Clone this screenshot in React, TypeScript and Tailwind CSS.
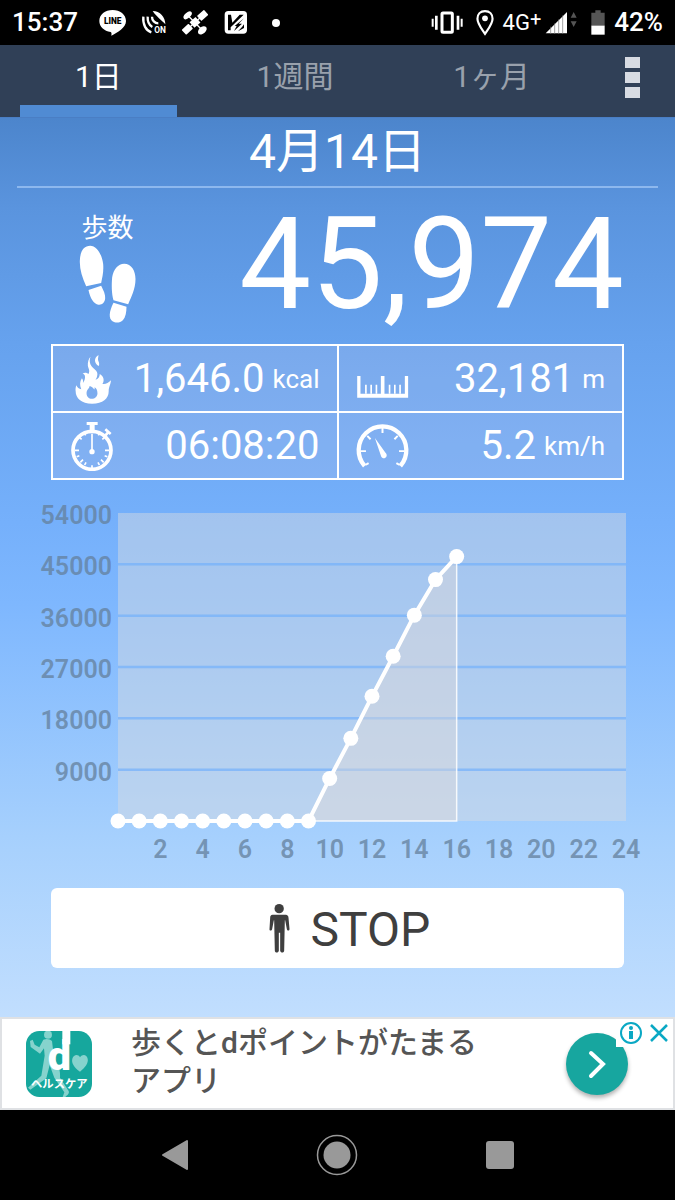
import type { ReactNode } from "react";

const tabs = [
  { label: "1日", active: true },
  { label: "1週間", active: false },
  { label: "1ヶ月", active: false },
];

const hourlySteps = [
  0, 0, 0, 0, 0, 0, 0, 0, 0, 0, 7460, 14490, 21860, 28890, 36090, 42320, 46360,
];

const StatusBar = () => (
  <header className="flex h-[45px] items-center justify-between bg-black px-3 text-[26px] font-medium text-white">
    <div className="flex items-center gap-[14px]">
      <span className="mr-[7px]">15:37</span>
      <svg viewBox="0 0 81 81" className="size-[27px]">
        <path
          d="M41 3C18 3 1 17 1 36c0 17 14 30 34 33 3 1 3 5 2 11 18-9 44-24 44-44C81 17 63 3 41 3Z"
          fill="#fff"
        />
        <text x="41" y="46" fontSize="25" fontWeight="900" textAnchor="middle">
          LINE
        </text>
      </svg>
      <svg viewBox="0 0 81 81" className="size-[27px]" fill="none" stroke="#fff">
        <path d="M38 6c22 0 38 18 38 40C66 34 50 24 38 6Z" fill="#fff" stroke="none" />
        <path d="M10 23c-2 24 8 42 24 47" strokeWidth="7" />
        <path d="M23 23c-1 16 5 26 14 31" strokeWidth="7" />
        <path d="M36 23c0 11 8 20 19 20" strokeWidth="7" />
        <text x="60" y="73" fontSize="25" fontWeight="700" textAnchor="middle" fill="#fff" stroke="none">
          ON
        </text>
      </svg>
      <svg viewBox="0 0 81 81" className="size-[27px]" fill="#fff">
        <g transform="rotate(-42 42 40)">
          <rect x="30" y="29" width="24" height="22" />
          <rect x="-3" y="30" width="28" height="20" rx="2" />
          <rect x="59" y="30" width="28" height="20" rx="2" />
          <path d="M20 38h44v4H20z" />
        </g>
        <ellipse cx="20" cy="19" rx="15" ry="8" transform="rotate(-42 20 19)" />
        <ellipse cx="64" cy="64" rx="15" ry="10" transform="rotate(-42 64 64)" />
        <path d="M20 19 64 64" stroke="#fff" strokeWidth="4" />
      </svg>
      <svg viewBox="0 0 81 81" className="size-[27px]">
        <rect x="8" y="6" width="67" height="68" rx="11" fill="#fff" />
        <path d="M18 17h9l4 24 22-24h12L26 55v9h-8Z" fill="#000" />
        <path d="M66 28 50 44h10L36 66l8-15h-6Z" fill="#000" />
        <path d="M66 46v11L48 67l12-13Z" fill="#000" />
      </svg>
      <span className="flex w-[27px] justify-center">
        <span className="size-2 rounded-full bg-white" />
      </span>
    </div>
    <div className="flex items-center">
      <svg viewBox="0 0 96 75" className="mr-3 h-[25px] w-8">
        <rect x="33" y="9" width="31" height="58" rx="3" fill="none" stroke="#fff" strokeWidth="9" />
        <path d="M12 17h8v42h-8zM2 26h6v24H2zM77 17h8v42h-8zM89 26h6v24h-6z" fill="#fff" />
      </svg>
      <svg viewBox="0 0 54 75" className="mr-2 h-[27px] w-5">
        <path
          d="M27 6C14 6 6 15 6 27c0 14 12 28 21 42 9-14 21-28 21-42C48 15 40 6 27 6Z"
          fill="none"
          stroke="#fff"
          strokeWidth="6"
        />
        <circle cx="27" cy="26" r="8" fill="#fff" />
      </svg>
      <span className="mr-1 flex text-[22px] leading-6 font-normal">
        4G<span className="text-xl leading-4">+</span>
      </span>
      <svg viewBox="0 0 99 75" className="mr-[13px] h-[25px] w-[33px]">
        <path d="M2 70 66 6v64Z" fill="#fff" />
        <path d="M17 50v22M29 40v32M41 28v44M53 16v56" stroke="#777" strokeWidth="2" />
        <path d="m86 6 9 17H77ZM86 51l9-17H77Z" fill="#555" />
      </svg>
      <svg viewBox="0 0 42 75" className="mr-[9px] h-[25px] w-[14px]">
        <path d="M13 1h16v7h12v40H1V8h12Z" fill="#555" />
        <path d="M1 47h40v27H1z" fill="#fff" />
      </svg>
      <span>42%</span>
    </div>
  </header>
);

const TabBar = () => (
  <nav className="flex h-[73px] border-b border-[#4a7ec4] bg-[#304057]">
    <div className="grid flex-1 grid-cols-3">
      {tabs.map((tab) => (
        <button
          key={tab.label}
          className={
            tab.active
              ? "flex flex-col px-5 text-3xl text-white"
              : "flex flex-col px-5 text-3xl text-[#99a1ac]"
          }
        >
          <span className="flex w-full flex-1 items-center justify-center pt-1">{tab.label}</span>
          <span className={tab.active ? "h-3 w-full bg-[#508bd3]" : "h-3 w-full"} />
        </button>
      ))}
    </div>
    <button aria-label="メニュー" className="flex w-[85px] flex-col items-center gap-1 pt-3">
      <span className="h-[11px] w-[15px] bg-[#d7dbe2]" />
      <span className="h-[11px] w-[15px] bg-[#d7dbe2]" />
      <span className="h-[11px] w-[15px] bg-[#d7dbe2]" />
    </button>
  </nav>
);

const FootprintsIcon = () => (
  <svg viewBox="0 0 176 240" className="h-20 w-[59px]" fill="#fff">
    <path d="M24 127C12 100 4 75 5 50 6 20 18 5 36 5c20 0 35 25 39 55 2 25-3 40-6 57Z" />
    <path d="m31 138 38-13c7 14 13 26 12 38-1 13-9 20-20 19-14-2-25-18-30-44Z" />
    <path d="m150 181-44-12c-6-19-6-49-4-69 4-25 18-41 36-41 22 0 34 21 34 46 0 30-13 54-22 76Z" />
    <path d="m106 176 39 12c0 17-3 32-11 41-8 8-22 9-31 3-12-10-11-28 3-56Z" />
  </svg>
);

const FlameIcon = () => (
  <svg viewBox="0 0 115 150" className="h-[50px] w-[38px]" fill="#fff">
    <path
      fillRule="evenodd"
      d="M50 8c-5 14-2 24 8 34 10 8 15 14 12 24-1 5-3 9-5 11 8-2 13-8 13-17 12 7 15 20 8 30 9 2 18-3 26-11-1 14-7 20-7 33 0 22-18 38-50 38C22 150 5 132 5 112c-1-6 0-12 2-18 3 7 8 11 15 12-5-11-5-24 2-33 4 5 4 10 3 14 6-8 7-15 6-22-2-5-4-6-7-7 7-4 14-2 18 2 5-9 0-16-2-24-1-12 2-22 8-28ZM47 96c1 7-9 10-9 22 0 10 7 17 16 17s17-7 17-17c0-9-4-16-9-18 1 3 1 5-1 7-3-6-8-10-14-11Z"
    />
    <path d="M74 2c-14 9-14 24 1 34 3-7 0-12-2-18-1-6 1-10 1-16Z" />
  </svg>
);

const StopwatchIcon = () => (
  <svg viewBox="0 0 132 150" className="h-[50px] w-11" fill="none" stroke="#fff">
    <circle cx="66" cy="88" r="57" strokeWidth="11" />
    <path d="M50 3h33v9H74v16H59V12h-9z" fill="#fff" stroke="none" />
    <path d="m106 44 8-10M106 25l16 14" strokeWidth="8" />
    <path
      d="M66 133v10M14 88h13M105 88h13M27 48l8 7M105 48l-8 7M31 124l8-8M101 124l-8-8M43 35l4 8M89 35l-4 8M20 107l8-3M112 107l-8-3M44 132l4-8M88 132l-4-8"
      strokeWidth="5"
    />
    <path d="M66 38v50" strokeWidth="5" />
    <circle cx="66" cy="92" r="8" fill="#fff" stroke="none" />
  </svg>
);

const RulerIcon = () => (
  <svg viewBox="0 0 160 70" className="h-[23px] w-[53px]" fill="#fff">
    <path d="M3 3h10v54h62V3h11v54h62V3h10v66H3z" />
    <path d="M27 30h5v27h-5zM43 30h5v27h-5zM59 30h5v27h-5zM99 30h5v27h-5zM115 30h5v27h-5zM131 30h5v27h-5z" />
  </svg>
);

const GaugeIcon = () => (
  <svg viewBox="0 0 160 133" className="h-11 w-[53px]" fill="none" stroke="#fff">
    <path d="M26 127a72 72 0 1 1 108 0" strokeWidth="13" />
    <path d="M80 10v17M14 82h16M146 82h-16M34 36l10 10M126 36l-10 10M28 124l10-6M132 124l-10-6" strokeWidth="6" />
    <path d="M57 42 76 98c3 7 13 7 16 0 2-4 0-8-3-11Z" fill="#fff" stroke="none" />
  </svg>
);

type MetricProps = {
  label: string;
  icon: ReactNode;
  value: string;
  unit?: string;
};

const Metric = ({ label, icon, value, unit }: MetricProps) => (
  <div className="flex h-[65px] items-center justify-between bg-[#c8c8e8]/20 px-[17px]">
    <dt aria-label={label} className="flex w-[53px] items-center justify-start">
      {icon}
    </dt>
    <dd className="flex items-center gap-2 text-[40px] leading-none text-white">
      {value}
      {unit && <span className="text-[26px]">{unit}</span>}
    </dd>
  </div>
);

const Summary = () => (
  <section className="px-[51px]">
    <div className="flex h-[156px] justify-between">
      <div className="flex flex-col items-center pt-6 pl-[27px] text-white">
        <h2 className="text-[26px] leading-8">歩数</h2>
        <FootprintsIcon />
      </div>
      <p className="pt-3 text-9xl text-white">45,974</p>
    </div>
    <dl className="grid grid-cols-2 gap-0.5 border-2 border-white bg-[linear-gradient(#fff,#fff),linear-gradient(#fff,#fff)] bg-[size:2px_100%,100%_2px] bg-center bg-no-repeat">
      <Metric
        label="カロリー"
        icon={<span className="pl-1"><FlameIcon /></span>}
        value="1,646.0"
        unit="kcal"
      />
      <Metric
        label="距離"
        icon={<span className="pt-4"><RulerIcon /></span>}
        value="32,181"
        unit="m"
      />
      <Metric label="時間" icon={<StopwatchIcon />} value="06:08:20" />
      <Metric label="速度" icon={<GaugeIcon />} value="5.2" unit="km/h" />
    </dl>
  </section>
);

const plot = { left: 118, right: 626, top: 33, bottom: 341 };
const maxSteps = 54000;

const xAt = (hour: number) => plot.left + (hour / 24) * (plot.right - plot.left);
const yAt = (steps: number) => plot.bottom - (steps / maxSteps) * (plot.bottom - plot.top);

const StepsChart = () => {
  const points = hourlySteps.map((steps, hour) => ({ x: xAt(hour), y: yAt(steps) }));
  const line = points.map((p) => `${p.x},${p.y}`).join(" ");
  const last = points[points.length - 1];
  const yTicks = [54000, 45000, 36000, 27000, 18000, 9000];
  const xTicks = [2, 4, 6, 8, 10, 12, 14, 16, 18, 20, 22, 24];

  return (
    <svg viewBox="0 0 675 408" className="w-full" role="img" aria-label="時間ごとの歩数">
      <rect
        x={plot.left}
        y={plot.top}
        width={plot.right - plot.left}
        height={plot.bottom - plot.top}
        fill="#d6dae1"
        fillOpacity="0.47"
      />
      {yTicks.slice(1).map((tick) => (
        <line
          key={tick}
          x1={plot.left}
          x2={plot.right}
          y1={yAt(tick)}
          y2={yAt(tick)}
          stroke="#73b0fb"
          strokeOpacity="0.7"
          strokeWidth="2.5"
        />
      ))}
      <polygon
        points={`${line} ${last.x},${plot.bottom} ${plot.left},${plot.bottom}`}
        fill="#dedad9"
        fillOpacity="0.45"
      />
      <path
        d={`M${last.x} ${last.y}V${plot.bottom}H${plot.left}`}
        fill="none"
        stroke="#fff"
        strokeOpacity="0.85"
        strokeWidth="1.5"
      />
      <polyline points={line} fill="none" stroke="#fff" strokeWidth="4" />
      {points.map((p) => (
        <circle key={p.x} cx={p.x} cy={p.y} r="7.5" fill="#fff" />
      ))}
      <g fill="#64809c" fillOpacity="0.75" fontSize="25" fontWeight="600">
        {yTicks.map((tick) => (
          <text key={tick} x="112" y={yAt(tick) + 11} textAnchor="end">
            {tick}
          </text>
        ))}
        {xTicks.map((tick) => (
          <text key={tick} x={xAt(tick)} y="378" textAnchor="middle">
            {tick}
          </text>
        ))}
      </g>
    </svg>
  );
};

const StopButton = () => (
  <div className="px-[51px] pb-[49px]">
    <button className="flex h-20 w-full items-center justify-center gap-[21px] rounded-md bg-white pt-1 pl-[22px] text-5xl text-[#3f3f3f]">
      <svg viewBox="0 0 68 150" className="mb-1 h-[50px] w-[23px]" fill="currentColor">
        <circle cx="36" cy="17" r="14" />
        <path d="M16 35h40c5 0 8 4 8 9l3 34c0 6-7 6-8 0l-5-26h-1l-2 91c0 7-11 7-12 0V89h-4v54c-1 7-12 7-12 0l-2-91h-1l-5 26c-1 6-9 6-8 0l2-34c0-5 2-9 7-9Z" />
      </svg>
      STOP
    </button>
  </div>
);

const AdBanner = () => (
  <aside className="relative flex h-[93px] items-center border-2 border-[#dfe1e4] bg-white pr-[45px] pl-6">
    <svg viewBox="0 0 198 198" className="size-[66px] shrink-0">
      <rect width="198" height="198" rx="40" fill="#16a79d" />
      <g fill="#86d3cd">
        <circle cx="66" cy="11" r="12" />
        <path d="M52 26c10-4 20-2 26 4l6 50c14 22 20 40 18 60l26 40c3 8-4 12-10 18h-8l5-14-30-44-14-38-10 40-48 34-7-6 40-36 10-60-2-22-12 16-28-20-2-18 8-4 6 15 14 8Z" />
        <path d="M162 122c-20-15-26-28-23-39 4-13 18-14 23-4 7-10 20-9 23 4 3 12-7 26-23 39Z" />
      </g>
      <text x="100" y="116" fontSize="124" fontWeight="900" textAnchor="middle" fill="#fff">
        d
      </text>
      <path d="M109 0h24v40h-24z" fill="#fff" />
      <text x="100" y="170" fontSize="34" fontWeight="700" textAnchor="middle" fill="#fff">
        ヘルスケア
      </text>
    </svg>
    <p className="ml-[39px] flex-1 pb-1 text-3xl leading-[38px] font-medium text-[#555]">
      歩くとdポイントがたまる
      <br />
      アプリ
    </p>
    <button
      aria-label="開く"
      className="flex size-[62px] shrink-0 items-center justify-center rounded-full bg-[#17a69f] shadow-[0_3px_4px_rgba(0,0,0,0.3)]"
    >
      <svg viewBox="0 0 62 62" className="size-[62px]">
        <path d="m25 20 12 11-12 12" fill="none" stroke="#fff" strokeWidth="4" strokeLinecap="round" />
      </svg>
    </button>
    <div className="absolute top-0 right-0 flex h-7 w-[57px] items-center justify-between bg-white pr-1 pl-[3px] text-[#0aa8c4]">
      <button aria-label="広告について">
        <svg viewBox="0 0 24 24" className="size-6">
          <circle cx="12" cy="12" r="10" fill="none" stroke="currentColor" strokeWidth="2" />
          <circle cx="12" cy="7" r="2" fill="currentColor" />
          <path d="M10 10h4v8h-4z" fill="currentColor" />
        </svg>
      </button>
      <button aria-label="広告を閉じる">
        <svg viewBox="0 0 20 20" className="size-5">
          <path d="m2 2 16 16M18 2 2 18" stroke="currentColor" strokeWidth="2.5" />
        </svg>
      </button>
    </div>
  </aside>
);

const NavigationBar = () => (
  <nav className="grid h-[90px] grid-cols-3 bg-black px-[94px] text-[#999]">
    <button aria-label="戻る" className="flex items-center justify-center">
      <svg viewBox="0 0 28 32" className="h-8 w-7">
        <path d="M2 16 26 2v28Z" fill="currentColor" stroke="currentColor" strokeWidth="2" strokeLinejoin="round" />
      </svg>
    </button>
    <button aria-label="ホーム" className="flex items-center justify-center">
      <svg viewBox="0 0 42 42" className="size-[42px]">
        <circle cx="21" cy="21" r="19.5" fill="none" stroke="currentColor" strokeWidth="1.5" />
        <circle cx="21" cy="21" r="13.5" fill="currentColor" />
      </svg>
    </button>
    <button aria-label="アプリ履歴" className="flex items-center justify-center">
      <span className="size-7 rounded-[3px] bg-[#999]" />
    </button>
  </nav>
);

const App = () => {
  return (
    <div className="flex min-h-screen flex-col bg-black font-[Roboto,'Noto_Sans_CJK_JP',sans-serif]">
      <StatusBar />
      <TabBar />
      <main className="flex-1 bg-[linear-gradient(#4c85cc_0%,#5a94de_10%,#66a2ee_25%,#75b0fb_45%,#7eb7fe_54%,#a6d0fd_80%,#c1defe_100%)]">
        <h1 className="mx-[17px] flex h-[70px] items-center justify-center border-b-2 border-[#8db8ee] text-5xl text-white">
          4月14日
        </h1>
        <Summary />
        <StepsChart />
        <StopButton />
      </main>
      <AdBanner />
      <NavigationBar />
    </div>
  );
};

export default App;
